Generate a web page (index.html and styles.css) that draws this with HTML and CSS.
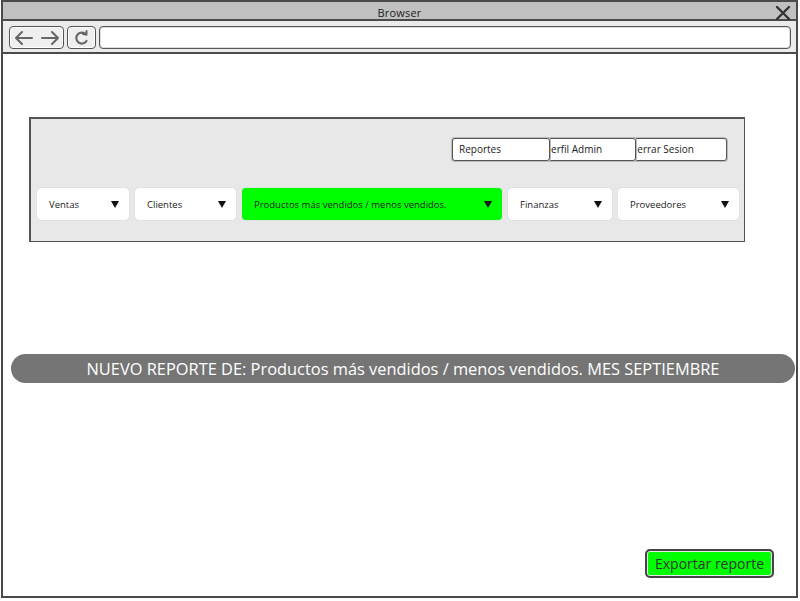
FILE: index.html
```html
<!DOCTYPE html>
<html lang="es">
<head>
<meta charset="utf-8">
<title>Browser</title>
<link rel="stylesheet" href="styles.css">
</head>
<body>
<div class="window">
  <div class="titlebar">
    <span class="title">Browser</span>
    <svg class="close" width="16" height="16" viewBox="0 0 16 16"><path d="M2 2 L14 14 M14 2 L2 14" stroke="#333" stroke-width="2.4" stroke-linecap="round" fill="none"/></svg>
  </div>
  <div class="toolbar">
    <div class="navbtn navpair">
      <svg width="50" height="18" viewBox="0 0 50 18"><path d="M4 9 H20 M10 3 L4 9 L10 15" stroke="#666" stroke-width="2" fill="none" stroke-linecap="round" stroke-linejoin="round"/><path d="M30 9 H46 M40 3 L46 9 L40 15" stroke="#666" stroke-width="2" fill="none" stroke-linecap="round" stroke-linejoin="round"/></svg>
    </div>
    <div class="navbtn reload">
      <svg width="18" height="18" viewBox="0 0 18 18"><path d="M13 5.5 A5.5 5.5 0 1 0 13.5 12" stroke="#666" stroke-width="2.2" fill="none" stroke-linecap="round"/><path d="M10 5 L13.5 5.5 L13.5 2" stroke="#666" stroke-width="2" fill="none" stroke-linecap="round" stroke-linejoin="round"/></svg>
    </div>
    <div class="urlbar"></div>
  </div>
  <div class="content">
    <div class="panel">
      <div class="links">
        <div class="link l1">Reportes</div>
        <div class="link l2">Perfil Admin</div>
        <div class="link l3">Cerrar Sesion</div>
      </div>
      <div class="menus">
        <div class="menu w-ventas"><span>Ventas</span><i class="caret"></i></div>
        <div class="menu w-clientes"><span>Clientes</span><i class="caret"></i></div>
        <div class="menu w-productos active"><span>Productos más vendidos / menos vendidos.</span><i class="caret"></i></div>
        <div class="menu w-finanzas"><span>Finanzas</span><i class="caret"></i></div>
        <div class="menu w-proveedores"><span>Proveedores</span><i class="caret"></i></div>
      </div>
    </div>
    <div class="banner">NUEVO REPORTE DE: Productos más vendidos / menos vendidos. MES SEPTIEMBRE</div>
    <div class="actions">
      <button class="export">Exportar reporte</button>
    </div>
  </div>
</div>
</body>
</html>
```
FILE: styles.css
```css
* { box-sizing: border-box; }
html, body { margin: 0; padding: 0; background: #fff; }
body {
  font-family: "Open Sans", "DejaVu Sans", sans-serif;
  color: #222;
  width: 800px;
  height: 601px;
  overflow: hidden;
}
.window {
  margin: 0 0 0 1px;
  width: 797px;
  height: 598px;
  border: 2px solid #4a4a4a;
  display: flex;
  flex-direction: column;
}
.titlebar {
  height: 19px;
  background: #c0c0c0;
  border-bottom: 2px solid #4a4a4a;
  display: flex;
  align-items: center;
  justify-content: center;
  position: relative;
  padding-top: 3px;
}
.title {
  font-size: 11px;
  color: #222;
  letter-spacing: 0.2px;
}
.close {
  position: absolute;
  right: 5px;
  top: 3px;
}
.toolbar {
  height: 33px;
  border-bottom: 2px solid #4a4a4a;
  background: #ebebeb;
  display: flex;
  align-items: center;
  padding: 2px 5px 0 6px;
  gap: 3px;
}
.navbtn {
  height: 23px;
  border: 1.5px solid #555;
  border-radius: 4px;
  background: #efefef;
  display: flex;
  align-items: center;
  justify-content: center;
  box-shadow: inset 0 0 0 1px #fff;
}
.navpair { width: 55px; }
.reload { width: 29px; }
.urlbar {
  flex: 1;
  height: 23px;
  border: 1.5px solid #555;
  border-radius: 4px;
  background: #fff;
  box-shadow: inset 0 0 0 1px #ddd;
}
.content {
  flex: 1;
  background: #fff;
  display: flex;
  flex-direction: column;
  padding: 63px 1px 18px 0;
}
.panel {
  margin-left: 26px;
  width: 716px;
  height: 125px;
  background: #e8e8e8;
  border: 2px solid #555;
  border-right-width: 1px;
  border-bottom-width: 1px;
  padding: 19px 0 0 6px;
}
.links {
  display: flex;
  justify-content: flex-end;
  padding-right: 17px;
  height: 23px;
}
.link {
  position: relative;
  height: 23px;
  background: #fff;
  border: 1.5px solid #555;
  border-radius: 3px;
  box-shadow: 0 0 0 1px #bbb;
  font-size: 10px;
  line-height: 20px;
  padding-left: 6px;
  white-space: nowrap;
  overflow: hidden;
  color: #222;
}
.l1 { width: 98px; z-index: 3; }
.l2 { width: 98px; margin-left: -12px; z-index: 2; }
.l3 { width: 103px; margin-left: -12px; z-index: 1; }
.menus {
  display: flex;
  gap: 6px;
  margin-top: 27px;
}
.menu {
  height: 32px;
  background: #fff;
  border-radius: 4px;
  box-shadow: 0 0 1px rgba(0,0,0,0.25);
  display: flex;
  align-items: center;
  justify-content: space-between;
  padding: 0 10px 0 12px;
  font-size: 9.5px;
  color: #222;
  white-space: nowrap;
}
.menu.active { background: #00ff00; }
.w-ventas { width: 92px; }
.w-clientes { width: 101px; }
.w-productos { width: 260px; }
.w-finanzas { width: 104px; }
.w-proveedores { width: 121px; }
.caret {
  width: 0;
  height: 0;
  border-left: 4.5px solid transparent;
  border-right: 4.5px solid transparent;
  border-top: 7px solid #111;
}
.banner {
  margin: 112px 0 0 8px;
  height: 29px;
  border-radius: 15px;
  background: #757575;
  color: #fff;
  font-size: 16.4px;
  display: flex;
  align-items: center;
  justify-content: center;
  white-space: nowrap;
}
.actions {
  margin-top: auto;
  display: flex;
  justify-content: flex-end;
  padding-right: 21px;
}
.export {
  width: 129px;
  height: 29px;
  background: #00ff00;
  border: 2px solid #444;
  border-radius: 5px;
  box-shadow: inset 0 0 0 1px #e8e8e8;
  font-family: "Open Sans", "DejaVu Sans", sans-serif;
  font-size: 14px;
  color: #333;
  padding: 0;
}
```
